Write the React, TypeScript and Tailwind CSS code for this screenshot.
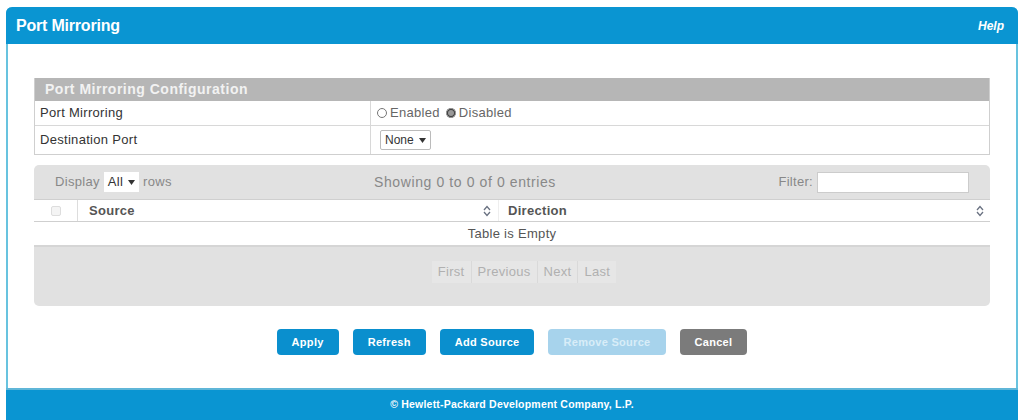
import React, { useState } from 'react';

const SortIcon = () => (
  <svg width="8" height="12" viewBox="0 0 8 12" className="text-gray-500">
    <path d="M1 5 L4 1.5 L7 5" fill="none" stroke="currentColor" strokeWidth="1.3" />
    <path d="M1 7 L4 10.5 L7 7" fill="none" stroke="currentColor" strokeWidth="1.3" />
  </svg>
);

const Caret = () => (
  <svg width="7" height="5" viewBox="0 0 7 5" className="ml-[5px]">
    <path d="M0 0 H7 L3.5 5 Z" fill="#333" />
  </svg>
);

const ActionButton: React.FC<{ label: string; tone?: 'blue' | 'faded' | 'gray' }> = ({
  label,
  tone = 'blue',
}) => {
  const cls =
    tone === 'blue'
      ? 'bg-[#0a8fce] text-white'
      : tone === 'faded'
        ? 'bg-[#a7d3ec] text-[#d8edf8]'
        : 'bg-[#7b7b7b] text-white';
  return (
    <button
      className={`h-[26px] rounded-[4px] px-[15px] text-[11px] font-bold tracking-[0.3px] ${cls}`}
    >
      {label}
    </button>
  );
};

export default function App() {
  const [mirroring, setMirroring] = useState<'enabled' | 'disabled'>('disabled');

  return (
    <div
      className="h-[420px] w-[1023px] overflow-hidden bg-white pt-[7px] pl-[6px] pr-[5px] text-[#333]"
      style={{ fontFamily: '"Liberation Sans", Arial, sans-serif' }}
    >
      <div className="flex h-[430px] flex-col rounded-t-[6px] border-x-2 border-[#68c3df] bg-white">
        {/* panel header */}
        <div className="-mx-[2px] flex h-[37px] items-center justify-between rounded-t-[6px] bg-[#0a95d2] pl-[10px] pr-[14px]">
          <span className="text-[16px] font-bold tracking-[-0.2px] text-white">Port Mirroring</span>
          <span className="text-[12px] font-bold italic text-white">Help</span>
        </div>

        <div className="px-[26px] pt-[34px]">
          {/* configuration */}
          <div className="border border-[#cfcfcf] border-t-0 text-[13px] tracking-[0.3px]">
            <div className="flex h-[23px] items-center bg-[#b6b6b6] px-[10px] text-[14px] font-bold tracking-[0.5px] text-[#f2f2f2]">
              Port Mirroring Configuration
            </div>
            <div className="flex h-[25px] border-b border-[#d8d8d8]">
              <div className="flex w-[336px] items-center border-r border-[#d8d8d8] pl-[5px]">
                Port Mirroring
              </div>
              <div className="flex items-center gap-[6px] pl-[6px] text-[#666]">
                <label className="flex items-center gap-[3px]">
                  <input
                    type="radio"
                    className="h-[10px] w-[10px] accent-[#999]"
                    checked={mirroring === 'enabled'}
                    onChange={() => setMirroring('enabled')}
                  />
                  Enabled
                </label>
                <label className="flex items-center gap-[3px]">
                  <input
                    type="radio"
                    className="h-[10px] w-[10px] accent-[#999]"
                    checked={mirroring === 'disabled'}
                    onChange={() => setMirroring('disabled')}
                  />
                  Disabled
                </label>
              </div>
            </div>
            <div className="flex h-[28px]">
              <div className="flex w-[336px] items-center border-r border-[#d8d8d8] pl-[5px]">
                Destination Port
              </div>
              <div className="flex items-center pl-[9px]">
                <div className="flex h-[20px] items-center rounded-[2px] border border-[#bbb] bg-white px-[4px] text-[12px] tracking-normal text-[#333]">
                  None
                  <Caret />
                </div>
              </div>
            </div>
          </div>

          {/* source table */}
          <div className="mt-[10px] overflow-hidden rounded-[5px] bg-[#e1e1e1] text-[13px] tracking-[0.3px]">
            <div className="flex h-[34px] items-center pl-[21px] pr-[21px] text-[#888]">
              <div className="flex w-[319px] items-center gap-[4px]">
                Display
                <div className="flex h-[20px] items-center bg-white px-[4px] text-[#333]">
                  All
                  <Caret />
                </div>
                rows
              </div>
              <div className="text-[14px] tracking-[0.6px]">Showing 0 to 0 of 0 entries</div>
              <div className="flex flex-1 items-center justify-end gap-[4px]">
                Filter:
                <input className="h-[21px] w-[152px] border border-[#ccc] bg-white" />
              </div>
            </div>
            <div className="flex h-[23px] items-center border-y border-[#cfcfcf] bg-white font-bold text-[#555]">
              <div className="flex h-full w-[44px] items-center justify-center border-r border-[#ddd]">
                <span className="h-[10px] w-[10px] rounded-[2px] border border-[#ddd] bg-[#f4f4f4]" />
              </div>
              <div className="flex flex-1 items-center justify-between pl-[11px] pr-[7px]">
                Source
                <SortIcon />
              </div>
              <div className="flex h-full w-[492px] items-center justify-between border-l border-[#eee] pl-[9px] pr-[6px]">
                Direction
                <SortIcon />
              </div>
            </div>
            <div className="flex h-[25px] items-center justify-center border-b-2 border-[#d5d5d5] bg-white text-[#555]">
              Table is Empty
            </div>
            <div className="flex h-[59px] items-start justify-center pl-[24px] pt-[14px] text-[#b0b0b0]">
              <div className="flex h-[22px] bg-[#e6e6e6]">
                <span className="flex items-center border-r border-[#d9d9d9] px-[6px]">First</span>
                <span className="flex items-center border-r border-[#d9d9d9] px-[6px]">Previous</span>
                <span className="flex items-center border-r border-[#d9d9d9] px-[6px]">Next</span>
                <span className="flex items-center px-[6px]">Last</span>
              </div>
            </div>
          </div>

          {/* actions */}
          <div className="mt-[23px] flex justify-center gap-[14px]">
            <ActionButton label="Apply" />
            <ActionButton label="Refresh" />
            <ActionButton label="Add Source" />
            <ActionButton label="Remove Source" tone="faded" />
            <ActionButton label="Cancel" tone="gray" />
          </div>
        </div>

        {/* footer */}
        <div className="-mx-[2px] mt-[33px] flex h-[43px] items-start justify-center border-t-2 border-[#5fb6d8] bg-[#0a95d2] pt-[7px] text-[10.5px] font-bold tracking-[0.2px] text-white">
          © Hewlett-Packard Development Company, L.P.
        </div>
      </div>
    </div>
  );
}
